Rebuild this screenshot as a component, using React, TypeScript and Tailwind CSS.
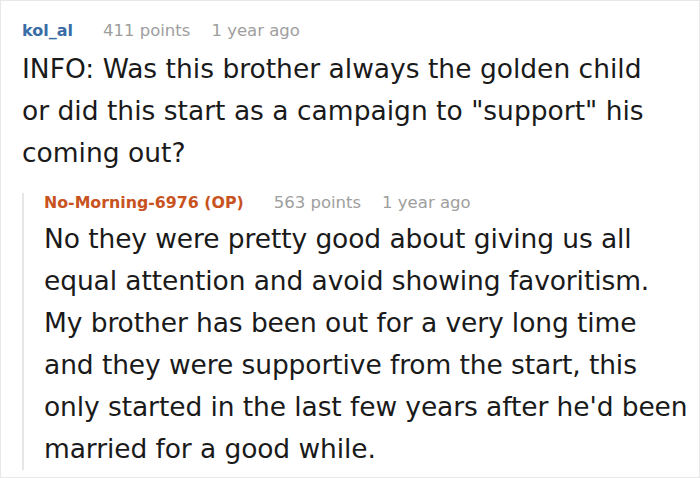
import React from "react";

export default function App() {
  return (
    <div
      className="w-[700px] h-[478px] bg-white border border-[#e8e8e8] overflow-hidden"
      style={{ fontFamily: '"DejaVu Sans", Verdana, sans-serif' }}
    >
      <div className="pl-[21px] pr-[4px] pt-[20px]">
        <div className="flex items-baseline leading-[20px]">
          <span className="text-[16px] font-bold text-[#3a6ca5]">kol_al</span>
          <span className="ml-[30px] text-[16.5px] text-[#9e9e9e]">411 points</span>
          <span className="ml-[21px] text-[16.5px] text-[#9e9e9e]">1 year ago</span>
        </div>
        <p className="mt-[7px] text-[26.5px] leading-[42px] text-[#1a1a1a] whitespace-nowrap">
          INFO: Was this brother always the golden child
          <br />
          or did this start as a campaign to "support" his
          <br />
          coming out?
        </p>
        <div className="mt-[19px] border-l-2 border-[#e6e6e6] pl-[20px]">
          <div className="flex items-baseline leading-[20px]">
            <span className="text-[15.8px] font-bold text-[#c8531f]">No-Morning-6976 (OP)</span>
            <span className="ml-[30px] text-[16.5px] text-[#9e9e9e]">563 points</span>
            <span className="ml-[21px] text-[16.5px] text-[#9e9e9e]">1 year ago</span>
          </div>
          <p className="mt-[5px] text-[26.5px] leading-[42px] text-[#1a1a1a] whitespace-nowrap tracking-[-0.1px]">
            No they were pretty good about giving us all
            <br />
            equal attention and avoid showing favoritism.
            <br />
            My brother has been out for a very long time
            <br />
            and they were supportive from the start, this
            <br />
            only started in the last few years after he'd been
            <br />
            married for a good while.
          </p>
        </div>
      </div>
    </div>
  );
}
